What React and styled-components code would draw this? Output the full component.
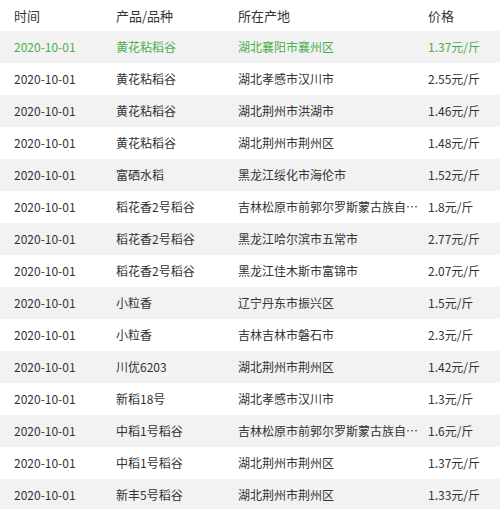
import React from 'react';
import styled, { createGlobalStyle } from 'styled-components';

const GlobalStyle = createGlobalStyle`
  html, body {
    margin: 0;
    padding: 0;
    background: #fff;
  }
  body {
    font-family: "Noto Sans CJK SC", "Noto Sans", sans-serif;
    color: #333;
  }
`;

// Table wrapper
const Table = styled.div`
  width: 500px;
  overflow: hidden;
`;

const cols = '102px 122px 194px 1fr';

// Header row
const HeadRow = styled.div`
  display: grid;
  grid-template-columns: ${cols};
  height: 31px;
  align-items: center;
  font-size: 13px;
  color: #333;
`;

// Data row
const Row = styled.div`
  display: grid;
  grid-template-columns: ${cols};
  height: 32px;
  align-items: center;
  font-size: 12px;
  background: ${(p) => (p.$striped ? '#f2f2f2' : '#fff')};
  color: ${(p) => (p.$active ? '#4cae4c' : '#333')};
`;

const Cell = styled.div`
  padding-left: ${(p) => (p.$pl !== undefined ? p.$pl : 14)}px;
  white-space: nowrap;
  line-height: 20px;
`;

const data = [
  ['黄花粘稻谷', '湖北襄阳市襄州区', '1.37元/斤'],
  ['黄花粘稻谷', '湖北孝感市汉川市', '2.55元/斤'],
  ['黄花粘稻谷', '湖北荆州市洪湖市', '1.46元/斤'],
  ['黄花粘稻谷', '湖北荆州市荆州区', '1.48元/斤'],
  ['富硒水稻', '黑龙江绥化市海伦市', '1.52元/斤'],
  ['稻花香2号稻谷', '吉林松原市前郭尔罗斯蒙古族自…', '1.8元/斤'],
  ['稻花香2号稻谷', '黑龙江哈尔滨市五常市', '2.77元/斤'],
  ['稻花香2号稻谷', '黑龙江佳木斯市富锦市', '2.07元/斤'],
  ['小粒香', '辽宁丹东市振兴区', '1.5元/斤'],
  ['小粒香', '吉林吉林市磐石市', '2.3元/斤'],
  ['川优6203', '湖北荆州市荆州区', '1.42元/斤'],
  ['新稻18号', '湖北孝感市汉川市', '1.3元/斤'],
  ['中稻1号稻谷', '吉林松原市前郭尔罗斯蒙古族自…', '1.6元/斤'],
  ['中稻1号稻谷', '湖北荆州市荆州区', '1.37元/斤'],
  ['新丰5号稻谷', '湖北荆州市荆州区', '1.33元/斤'],
];

export default function App() {
  return (
    <>
      <GlobalStyle />
      <Table>
        <HeadRow>
          <Cell>时间</Cell>
          <Cell>产品/品种</Cell>
          <Cell>所在产地</Cell>
          <Cell $pl={10}>价格</Cell>
        </HeadRow>
        {data.map((r, i) => (
          <Row key={i} $striped={i % 2 === 0} $active={i === 0}>
            <Cell>2020-10-01</Cell>
            <Cell>{r[0]}</Cell>
            <Cell>{r[1]}</Cell>
            <Cell $pl={10}>{r[2]}</Cell>
          </Row>
        ))}
      </Table>
    </>
  );
}
